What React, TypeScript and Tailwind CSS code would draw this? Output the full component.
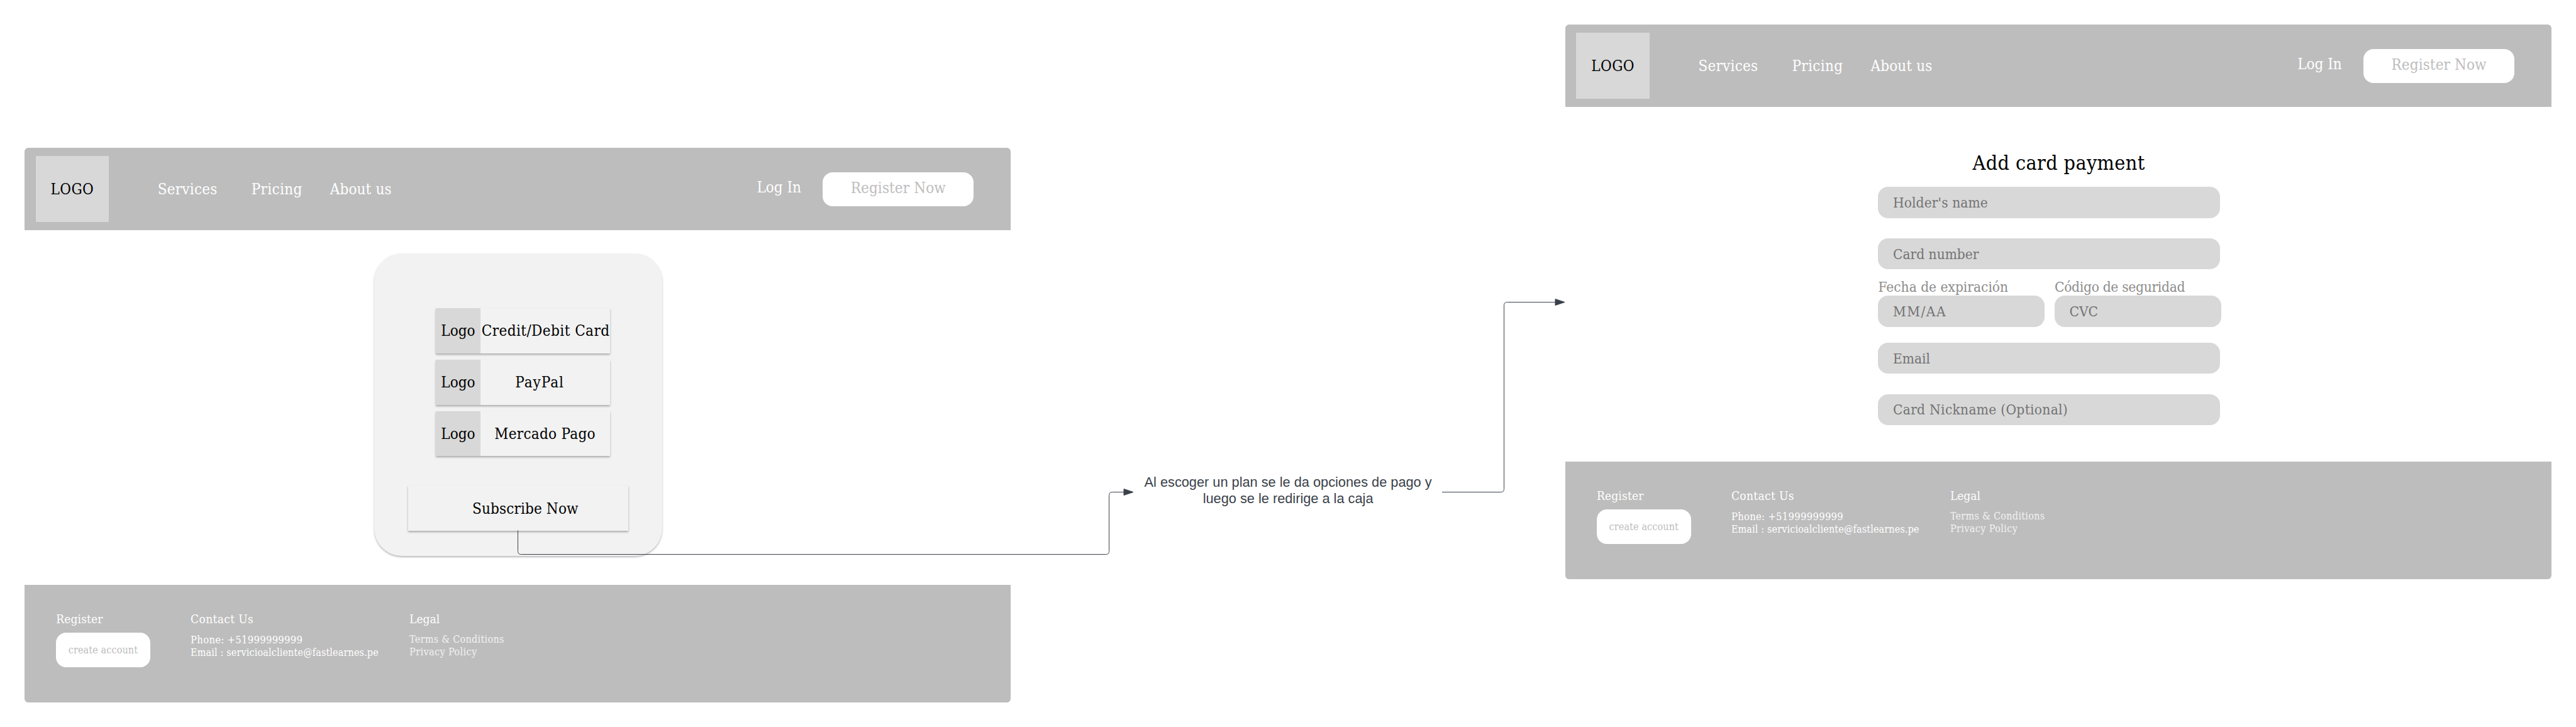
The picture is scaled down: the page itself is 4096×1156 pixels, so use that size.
import type { ReactNode } from 'react';

function Header() {
  return (
    <header className="flex h-[130.6px] shrink-0 items-start rounded-t-[6px] bg-[#bdbdbd] text-[24px] leading-[28px] text-white">
      <div className="mt-[12.6px] ml-[17.4px] flex h-[105.2px] w-[116.6px] shrink-0 items-center justify-center bg-[#d8d8d8] pt-[2px] tracking-[0.4px] text-black">
        LOGO
      </div>
      <nav className="mt-[52.2px] ml-[77.5px] flex whitespace-nowrap">
        <a className="w-[149px] tracking-[0.25px]">Services</a>
        <a className="w-[125px] tracking-[0.35px]">Pricing</a>
        <a className="tracking-[0.15px]">About us</a>
      </nav>
      <a className="mt-[49.2px] mr-[35px] ml-auto w-[70px] whitespace-nowrap">Log In</a>
      <button className="mt-[38.4px] mr-[59px] flex h-[54.2px] w-[239.8px] shrink-0 items-center justify-center rounded-[16px] bg-white pb-[4px] tracking-[0.12px] text-[#bdbdbd]">
        Register Now
      </button>
    </header>
  );
}

function Footer() {
  return (
    <footer className="flex h-[186.9px] shrink-0 items-start rounded-b-[6px] bg-[#bdbdbd] pt-[42.5px] pl-[50px] text-[16px] leading-[19.6px] whitespace-nowrap text-white">
      <div className="w-[213.9px]">
        <h3 className="text-[19px] leading-[22px] tracking-[0.15px]">Register</h3>
        <button className="mt-[11.6px] flex h-[54.6px] w-[149.6px] items-center justify-center rounded-[16px] bg-white leading-[20px] tracking-[0.13px] text-[#bdbdbd]">
          create account
        </button>
      </div>
      <div className="w-[348px] pt-[0.6px]">
        <h3 className="mb-[13px] text-[19px] leading-[22px] tracking-[0.35px]">Contact Us</h3>
        <p className="text-[16.5px] tracking-[0.28px]">Phone: +51999999999</p>
        <p className="tracking-[0.15px]">Email : servicioalcliente@fastlearnes.pe</p>
      </div>
      <div>
        <h3 className="mb-[12.3px] text-[19px] leading-[22px]">Legal</h3>
        <p className="tracking-[0.3px] text-white/80">Terms &amp; Conditions</p>
        <p className="tracking-[0.4px] text-white/80">Privacy Policy</p>
      </div>
    </footer>
  );
}

function Screen({ children }: { children: ReactNode }) {
  return (
    <section className="flex h-[881.9px] w-[1568px] shrink-0 flex-col font-['DejaVu_Serif_Condensed','DejaVu_Serif',serif]">
      <Header />
      <main className="flex-1">{children}</main>
      <Footer />
    </section>
  );
}

function PayOption({ children }: { children: ReactNode }) {
  return (
    <div className="flex h-[71.6px] w-[276.3px] bg-[#f2f2f2] shadow-[0_2px_3px_rgba(0,0,0,0.3)]">
      <div className="flex w-[70.3px] shrink-0 items-center justify-center bg-[#d8d8d8]">Logo</div>
      <div className="flex flex-1 items-center justify-center whitespace-nowrap">{children}</div>
    </div>
  );
}

function PlanCard() {
  return (
    <div className="mt-[37px] ml-[555.8px] h-[481.2px] w-[458.2px] rounded-[44px] bg-[#f2f2f2] pt-[87.3px] text-[24px] leading-[28px] text-black shadow-[0_2px_3px_rgba(0,0,0,0.27)]">
      <div className="ml-[98.3px] flex flex-col gap-[10.3px]">
        <PayOption>
          <span className="pl-[2px] tracking-[0.45px]">Credit/Debit Card</span>
        </PayOption>
        <PayOption>
          <span className="pr-[17px] tracking-[1px]">PayPal</span>
        </PayOption>
        <PayOption>
          <span className="tracking-[0.3px]">Mercado Pago</span>
        </PayOption>
      </div>
      <button className="mt-[46.9px] ml-[54.2px] flex h-[71.4px] w-[350px] items-center justify-center bg-[#f2f2f2] pt-[1px] pl-[22.4px] tracking-[0.15px] shadow-[0_2px_3px_rgba(0,0,0,0.3)]">
        Subscribe Now
      </button>
    </div>
  );
}

const fieldBox = 'flex h-[49.4px] items-center rounded-[16px] bg-[#d8d8d8] pl-[23.5px] text-[#737373]';

function CardForm() {
  return (
    <form className="ml-[497.5px] flex w-[543.7px] flex-col pt-[70px] text-[22.5px] leading-[26px] whitespace-nowrap">
      <h2 className="pl-[30.6px] text-center text-[32px] leading-[38px] tracking-[0.4px] text-black">Add card payment</h2>
      <div className={`${fieldBox} mt-[19.4px] tracking-[0.1px]`}>Holder's name</div>
      <div className={`${fieldBox} mt-[32.4px]`}>Card number</div>
      <div className="mt-[14.2px] flex gap-[15.5px]">
        <label className="flex w-[265px] shrink-0 flex-col gap-[1.8px] text-[#8c8c8c]">
          Fecha de expiración
          <span className={`${fieldBox} tracking-[1.5px]`}>MM/AA</span>
        </label>
        <label className="flex w-[264.6px] shrink-0 flex-col gap-[1.8px] text-[#8c8c8c]">
          <span className="tracking-[-0.28px]">Código de seguridad</span>
          <span className={fieldBox}>CVC</span>
        </label>
      </div>
      <div className={`${fieldBox} mt-[25.3px]`}>Email</div>
      <div className={`${fieldBox} mt-[32.2px] tracking-[0.3px]`}>Card Nickname (Optional)</div>
    </form>
  );
}

function Connectors() {
  return (
    <svg className="pointer-events-none absolute inset-0" width="4096" height="1156" viewBox="0 0 4096 1156" fill="none" stroke="#3a414a" strokeWidth="1">
      <path d="M823.5 843.4V876.5Q823.5 881.5 828.5 881.5H1758.5Q1763.5 881.5 1763.5 876.5V787.5Q1763.5 782.5 1768.5 782.5H1788" />
      <path d="M1787 777.5L1802 782.5L1787 787.5Z" fill="#3a414a" />
      <path d="M2293 782.5H2386.5Q2391.5 782.5 2391.5 777.5V485.5Q2391.5 480.5 2396.5 480.5H2474" />
      <path d="M2473 475.5L2488 480.5L2473 485.5Z" fill="#3a414a" />
    </svg>
  );
}

export default function App() {
  return (
    <div className="relative flex h-[1156px] w-[4096px] items-start overflow-hidden bg-white">
      <div className="mt-[235.2px] ml-[39.2px]">
        <Screen>
          <PlanCard />
        </Screen>
      </div>
      <p className="mt-[753.6px] w-[881.8px] shrink-0 text-center font-['Liberation_Sans',sans-serif] text-[21.75px] leading-[26px] text-[#3a414a]">
        Al escoger un plan se le da opciones de pago y
        <br />
        luego se le redirige a la caja
      </p>
      <div className="mt-[39.2px]">
        <Screen>
          <CardForm />
        </Screen>
      </div>
      <Connectors />
    </div>
  );
}
